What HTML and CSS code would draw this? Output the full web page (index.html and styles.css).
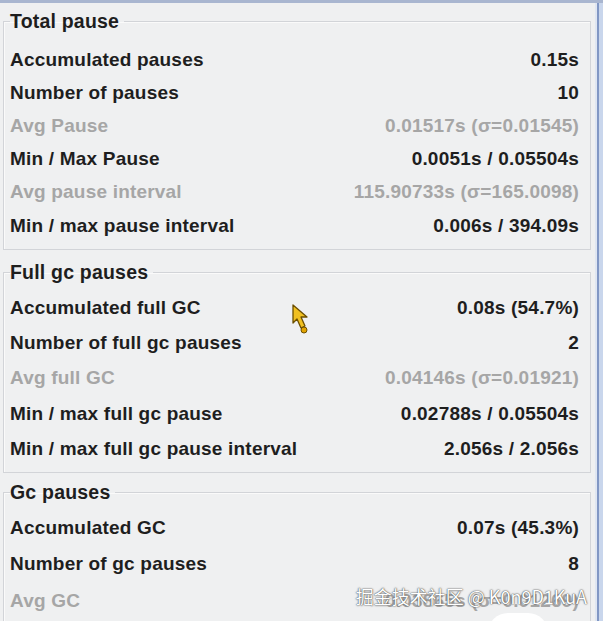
FILE: index.html
```html
<!DOCTYPE html>
<html>
<head>
<meta charset="utf-8">
<link rel="stylesheet" href="styles.css">
</head>
<body>
<div class="window">
  <div class="pane">
    <fieldset class="group g1">
      <legend>Total pause</legend>
      <div class="row"><span>Accumulated pauses</span><span>0.15s</span></div>
      <div class="row"><span>Number of pauses</span><span>10</span></div>
      <div class="row dim"><span>Avg Pause</span><span>0.01517s (σ=0.01545)</span></div>
      <div class="row"><span>Min / Max Pause</span><span>0.0051s / 0.05504s</span></div>
      <div class="row dim"><span>Avg pause interval</span><span>115.90733s (σ=165.0098)</span></div>
      <div class="row"><span>Min / max pause interval</span><span>0.006s / 394.09s</span></div>
    </fieldset>
    <fieldset class="group g2">
      <legend>Full gc pauses</legend>
      <div class="row"><span>Accumulated full GC</span><span>0.08s (54.7%)</span></div>
      <div class="row"><span>Number of full gc pauses</span><span>2</span></div>
      <div class="row dim"><span>Avg full GC</span><span>0.04146s (σ=0.01921)</span></div>
      <div class="row"><span>Min / max full gc pause</span><span>0.02788s / 0.05504s</span></div>
      <div class="row"><span>Min / max full gc pause interval</span><span>2.056s / 2.056s</span></div>
    </fieldset>
    <fieldset class="group g3">
      <legend>Gc pauses</legend>
      <div class="row"><span>Accumulated GC</span><span>0.07s (45.3%)</span></div>
      <div class="row"><span>Number of gc pauses</span><span>8</span></div>
      <div class="row dim"><span>Avg GC</span><span>0.03865s (σ=0.01269)</span></div>
    </fieldset>
  </div>
  <svg class="cursor" width="20" height="32" viewBox="0 0 20 32">
    <path d="M2 2 L2 20 L6 16 L10 25 L14 23 L10 14 L16 14 Z" fill="#f0c020" stroke="#6b4e00" stroke-width="1.3" stroke-linejoin="round"/>
    <circle cx="13" cy="27" r="3" fill="#e2a400" stroke="#6b4e00" stroke-width="1"/>
  </svg>
  <div class="watermark">掘金技术社区 @ K0n9D1KuA</div>
  <div class="blob"></div>
</div>
</body>
</html>
```
FILE: styles.css
```css
html, body {
  margin: 0;
  padding: 0;
  background: #eff0f1;
}
body {
  width: 603px;
  height: 621px;
  overflow: hidden;
  font-family: "Liberation Sans", Arial, sans-serif;
}
.window {
  position: relative;
  width: 603px;
  height: 621px;
  box-sizing: border-box;
  border-top: 3px solid #a9b6d0;
  background: #eff0f1;
}
.window::after {
  content: "";
  position: absolute;
  top: 0;
  right: 0;
  width: 8px;
  height: 100%;
  background: linear-gradient(to right, #dfe6f2 0, #dfe6f2 2px, #8197c4 2px, #8197c4 4px, #c9d6ec 4px);
}
.pane {
  padding: 8px 0 0 3px;
  width: 588px;
}
.group {
  margin: 0;
  border: 1px solid #d2d4d8;
  box-shadow: inset 1px 1px 0 #fafafa;
  padding: 0 11px 0 6px;
  min-width: 0;
}
.group legend {
  font-size: 19.5px;
  line-height: 20px;
  font-weight: bold;
  letter-spacing: 0.2px;
  color: #1e1e1e;
  padding: 0 5px 0 0;
}
.row {
  display: flex;
  justify-content: space-between;
  align-items: center;
  font-size: 19px;
  letter-spacing: 0.2px;
  font-weight: bold;
  color: #1e1e1e;
}
.row.dim {
  color: #a6a6a6;
}
.g1 { padding-top: 12px; padding-bottom: 7px; }
.g1 .row { height: 33.2px; }
.g2 { margin-top: 12px; padding-top: 8px; padding-bottom: 6px; }
.g2 .row { height: 35.25px; }
.g3 { margin-top: 9px; padding-top: 7px; padding-bottom: 20px; }
.g3 .row { height: 36.5px; }
.cursor {
  position: absolute;
  left: 291px;
  top: 300px;
}
.watermark {
  position: absolute;
  right: 16px;
  top: 582px;
  font-family: "Noto Sans CJK SC", "Liberation Sans", sans-serif;
  font-size: 18px;
  line-height: 22px;
  color: #ffffff;
  text-shadow: 0 0 2px #555, 0 0 1px #333;
}
.blob {
  position: absolute;
  left: 488px;
  top: 610px;
  width: 60px;
  height: 20px;
  border-radius: 30px 30px 0 0;
  background: #ffffff;
}
```
